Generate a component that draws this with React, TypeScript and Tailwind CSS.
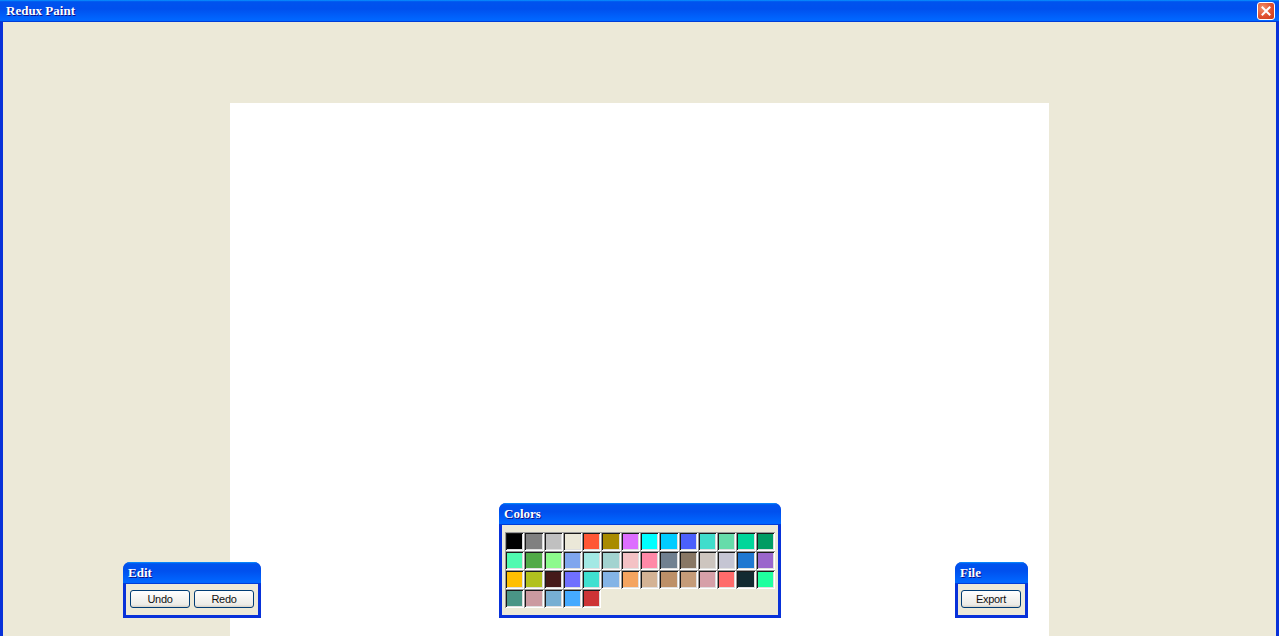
import React from 'react';

const palette = [
  '#000000', '#808080', '#c0c0c0', '#ebe8d8', '#ff5736', '#a98b00', '#dd6eff', '#00ffff', '#00ccff', '#4b60fb', '#40ddcc', '#66dcaa', '#00d69a', '#009c63',
  '#50fab0', '#51aa47', '#8cfa8c', '#7fa6ee', '#a2e8e4', '#a2d3d0', '#f4c2c5', '#ff89a8', '#708090', '#887765', '#cdc5bf', '#c5c5d3', '#1f78d1', '#9a66cc',
  '#ffbf00', '#b1c11e', '#451a1a', '#7070ff', '#40e0d0', '#84b4e6', '#f4a460', '#d4b395', '#bd9068', '#c59c79', '#d6a0a8', '#ff6b6b', '#122a31', '#1fff9f',
  '#4a9586', '#cb9aa0', '#77afd3', '#45aaff', '#cd3436'
];

const titleGradient =
  'bg-[linear-gradient(180deg,#0997ff,#0053ee_8%,#0050ee_40%,#0066ff_88%,#0066ff_93%,#005bff_95%,#003dd7_96%,#003dd7)]';

const XpButton = ({ label }: { label: string }) => (
  <button className="w-[60px] h-[18px] rounded-[3px] border border-[#003c74] bg-[linear-gradient(180deg,#ffffff,#ecebe6_86%,#d6d0c5)] text-[11px] leading-none text-[#111] tracking-[-0.3px] font-['Liberation_Sans_Narrow','Liberation_Sans',Arial,sans-serif]">
    {label}
  </button>
);

const Panel = ({
  title,
  className,
  children
}: {
  title: string;
  className: string;
  children: React.ReactNode;
}) => (
  <div className={`absolute flex flex-col rounded-t-[7px] bg-[#0831d9] ${className}`}>
    <div className={`h-[22px] shrink-0 rounded-t-[7px] px-[5px] flex items-center ${titleGradient}`}>
      <span className="text-white font-bold text-[13px] font-['Liberation_Serif',serif] [text-shadow:1px_1px_#0f1089]">
        {title}
      </span>
    </div>
    <div className="flex-1 mx-[3px] mb-[3px] bg-[#ece9d8]">{children}</div>
  </div>
);

const App = () => {
  return (
    <div className="relative w-[1279px] h-[636px] overflow-hidden flex flex-col bg-[#0831d9]">
      <div className={`h-[22px] shrink-0 flex items-center justify-between pl-[6px] pr-[4px] ${titleGradient}`}>
        <span className="text-white font-bold text-[13px] font-['Liberation_Serif',serif] [text-shadow:1px_1px_#0f1089]">
          Redux Paint
        </span>
        <div className="w-[18px] h-[18px] rounded-[3px] border border-white bg-[radial-gradient(circle_at_30%_30%,#f0906a,#e0502e_55%,#c83a18)] flex items-center justify-center">
          <svg width="10" height="10" viewBox="0 0 10 10">
            <path d="M1.5 1.5 L8.5 8.5 M8.5 1.5 L1.5 8.5" stroke="white" strokeWidth="2" strokeLinecap="square" />
          </svg>
        </div>
      </div>

      <div className="flex-1 ml-[3px] mr-[3px] bg-[#ece9d8] overflow-hidden">
        <div className="mx-auto mt-[81px] w-[819px] h-[600px] bg-white" />
      </div>

      <Panel title="Edit" className="left-[123px] top-[562px] w-[138px] h-[56px]">
        <div className="flex gap-[4px] pt-[6px] pl-[4px]">
          <XpButton label="Undo" />
          <XpButton label="Redo" />
        </div>
      </Panel>

      <Panel title="Colors" className="left-[499px] top-[503px] w-[282px] h-[115px]">
        <div className="grid grid-cols-[repeat(14,1fr)] px-[3px] pt-[7px]">
          {palette.map((c, i) => (
            <div
              key={i}
              className="h-[19px] shadow-[inset_1px_1px_#9a9a9a,inset_-1px_-1px_#ffffff,inset_2px_2px_#1a1a1a,inset_-2px_-2px_#dfdfdf]"
              style={{ backgroundColor: c }}
            />
          ))}
        </div>
      </Panel>

      <Panel title="File" className="left-[955px] top-[562px] w-[73px] h-[56px]">
        <div className="flex pt-[6px] pl-[3px]">
          <XpButton label="Export" />
        </div>
      </Panel>
    </div>
  );
};

export default App;
